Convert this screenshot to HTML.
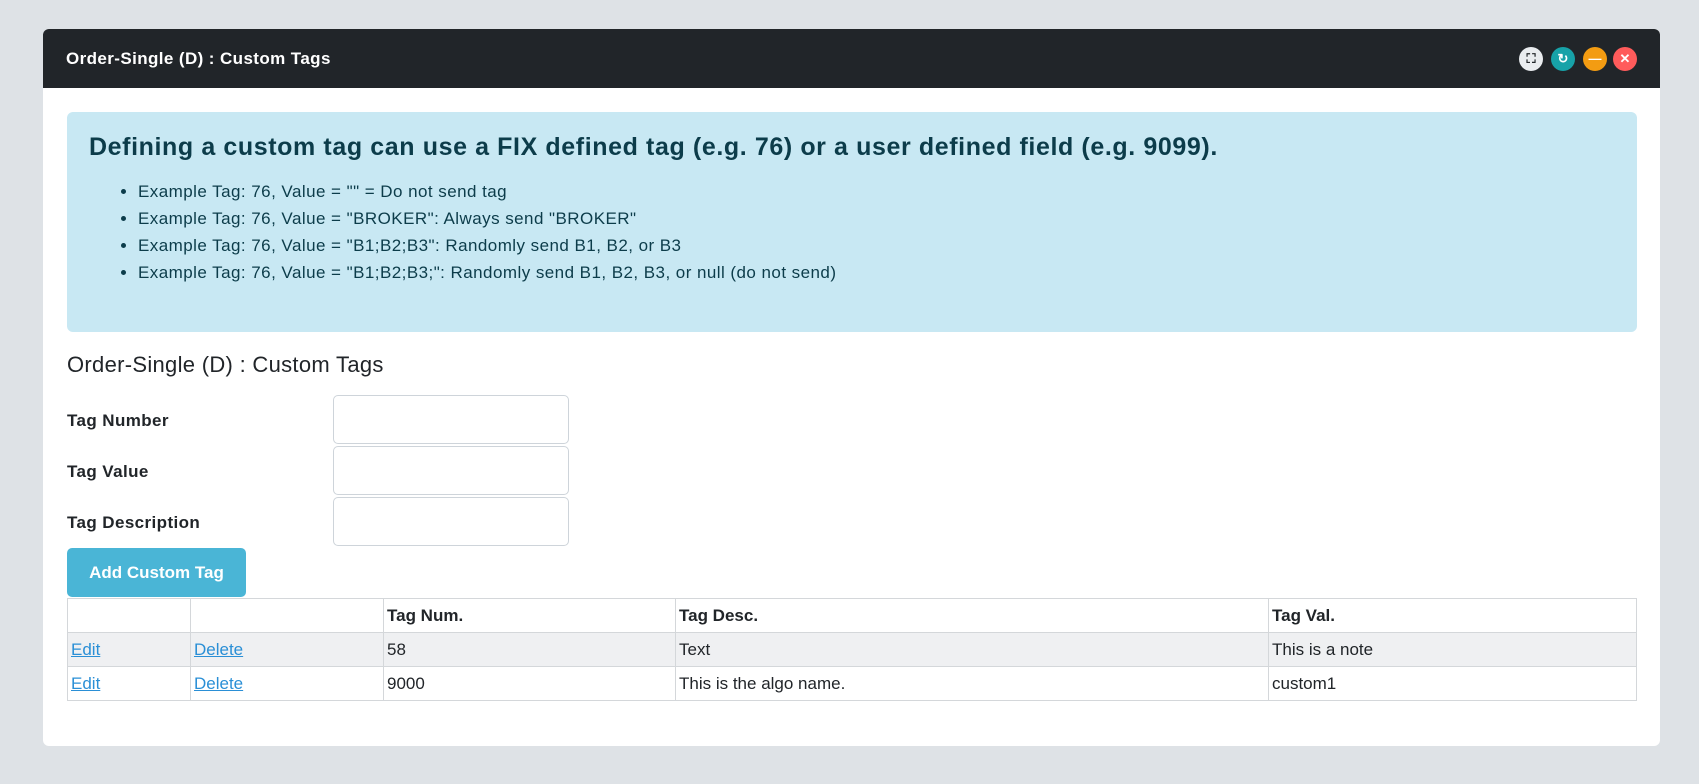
<!DOCTYPE html>
<html><head><style>
*{box-sizing:border-box;margin:0;padding:0}
body{width:1699px;height:784px;background:#dee2e6;font-family:"Liberation Sans",sans-serif;color:#212529;position:relative;overflow:hidden}
.card{position:absolute;left:43px;top:29px;width:1617px;height:717px;background:#fff;border-radius:6px;overflow:hidden}
.hdr{height:59px;background:#212529;color:#fff;font-weight:bold;font-size:17px;padding-left:23px;line-height:59px;letter-spacing:0.4px}
.btn{position:absolute;top:18px;width:24px;height:24px;border-radius:50%;color:#fff;font-size:13px;font-weight:bold;text-align:center;line-height:24px}
.alert{position:absolute;left:24px;top:83px;width:1570px;height:220px;background:#c8e8f3;border-radius:6px;color:#0c3c4a}
.alert h2{position:absolute;left:22px;top:21px;font-size:25px;font-weight:bold;white-space:nowrap;letter-spacing:0.6px}
.alert ul{position:absolute;left:71px;top:66px;font-size:17px;line-height:27px;letter-spacing:0.45px}
.sub{position:absolute;left:24px;top:323px;font-size:22px;letter-spacing:0.3px}
.lbl{position:absolute;left:24px;font-size:17px;font-weight:bold;letter-spacing:0.4px}
.inp{position:absolute;left:290px;width:236px;height:49px;border:1px solid #ced4da;border-radius:5px}
.add{position:absolute;left:24px;top:519px;width:179px;height:49px;background:#4ab5d6;border-radius:5px;color:#fff;font-weight:bold;font-size:17px;text-align:center;line-height:49px}
table{position:absolute;left:24px;top:569px;width:1570px;border-collapse:collapse;font-size:17px}
td{border:1px solid #d4d7da;height:34px;padding:0 3px;vertical-align:middle}
tr.g td{background:#eff0f2}
th{border:1px solid #d4d7da;height:34px;text-align:left;padding:0 3px}
a{color:#2a8fd6;text-decoration:underline}
</style></head><body>
<div class="card">
<div class="hdr">Order-Single (D) : Custom Tags</div>
<div class="btn" style="left:1476px;background:#e9ecef;color:#212529">⛶</div>
<div class="btn" style="left:1508px;background:#17a2a8">↻</div>
<div class="btn" style="left:1540px;background:#f39c12">—</div>
<div class="btn" style="left:1570px;background:#ff5b5b">✕</div>
<div class="alert">
<h2>Defining a custom tag can use a FIX defined tag (e.g. 76) or a user defined field (e.g. 9099).</h2>
<ul>
<li>Example Tag: 76, Value = "" = Do not send tag</li>
<li>Example Tag: 76, Value = "BROKER": Always send "BROKER"</li>
<li>Example Tag: 76, Value = "B1;B2;B3": Randomly send B1, B2, or B3</li>
<li>Example Tag: 76, Value = "B1;B2;B3;": Randomly send B1, B2, B3, or null (do not send)</li>
</ul></div>
<div class="sub">Order-Single (D) : Custom Tags</div>
<div class="lbl" style="top:382px">Tag Number</div>
<div class="lbl" style="top:433px">Tag Value</div>
<div class="lbl" style="top:484px">Tag Description</div>
<div class="inp" style="top:366px"></div>
<div class="inp" style="top:417px"></div>
<div class="inp" style="top:468px"></div>
<div class="add">Add Custom Tag</div>
<table>
<tr><th style="width:123px"></th><th style="width:193px"></th><th style="width:292px">Tag Num.</th><th style="width:593px">Tag Desc.</th><th>Tag Val.</th></tr>
<tr class="g"><td><a>Edit</a></td><td><a>Delete</a></td><td>58</td><td>Text</td><td>This is a note</td></tr>
<tr><td><a>Edit</a></td><td><a>Delete</a></td><td>9000</td><td>This is the algo name.</td><td>custom1</td></tr>
</table>
</div>
</body></html>
